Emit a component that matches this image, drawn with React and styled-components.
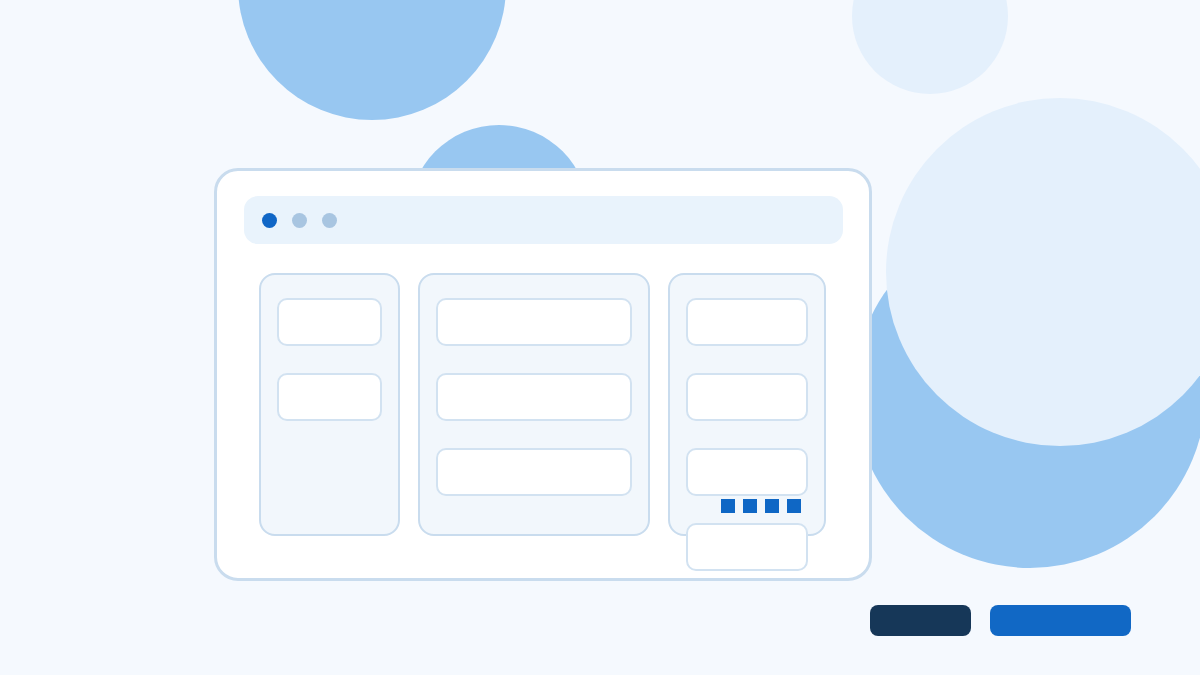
import React from 'react';
import styled, { createGlobalStyle } from 'styled-components';

const GlobalStyle = createGlobalStyle`
  html, body {
    margin: 0;
    padding: 0;
    background: #f5f9fe;
    font-family: "Liberation Sans", Arial, sans-serif;
  }
  * { box-sizing: border-box; }
`;

const Page = styled.div`
  position: relative;
  width: 1200px;
  height: 675px;
  overflow: hidden;
  background: #f5f9fe;
  display: flex;
  flex-direction: column;
  padding: 168px 69px 0 214px;
`;

// decorative background bubbles
const Bubble = styled.div`
  position: absolute;
  border-radius: 50%;
  left: ${p => p.$x - p.$r}px;
  top: ${p => p.$y - p.$r}px;
  width: ${p => p.$r * 2}px;
  height: ${p => p.$r * 2}px;
  background: ${p => (p.$light ? '#e4f0fc' : '#98c7f1')};
`;

const Window = styled.div`
  position: relative;
  z-index: 1;
  width: 658px;
  height: 413px;
  background: #ffffff;
  border: 3px solid #c9dcee;
  border-radius: 24px;
  padding: 25px 26px 0 27px;
  display: flex;
  flex-direction: column;
`;

const TitleBar = styled.div`
  height: 48px;
  border-radius: 14px;
  background: #e9f3fc;
  display: flex;
  align-items: center;
  gap: 15px;
  padding-left: 18px;
`;

const Dot = styled.span`
  width: 15px;
  height: 15px;
  border-radius: 50%;
  background: ${p => (p.$active ? '#1066c6' : '#a8c5e1')};
`;

const Board = styled.div`
  display: flex;
  gap: 18px;
  margin-top: 29px;
  padding-left: 15px;
`;

const Column = styled.div`
  position: relative;
  width: ${p => p.$w}px;
  height: 263px;
  border: 2px solid #c9dcee;
  border-radius: 16px;
  background: #f2f7fc;
  padding: 23px 16px 0;
  display: flex;
  flex-direction: column;
  gap: 27px;
`;

const Card = styled.div`
  flex: none;
  height: 48px;
  background: #ffffff;
  border: 2px solid #d2e2f1;
  border-radius: 10px;
`;

const Handle = styled.div`
  position: absolute;
  right: 23px;
  top: 224px;
  display: flex;
  gap: 8px;
`;

const Square = styled.span`
  width: 14px;
  height: 14px;
  background: #0f67c5;
`;

const Footer = styled.div`
  position: relative;
  z-index: 1;
  display: flex;
  justify-content: flex-end;
  gap: 19px;
  margin-top: 24px;
`;

const Button = styled.div`
  width: ${p => p.$w}px;
  height: 31px;
  border-radius: 8px;
  background: ${p => (p.$dark ? '#163758' : '#1168c5')};
`;

const columns = [
  { w: 141, cards: 2 },
  { w: 232, cards: 3 },
  { w: 158, cards: 4, handle: true },
];

export default function App() {
  return (
    <>
      <GlobalStyle />
      <Page>
        <Bubble $x={372} $y={-14} $r={134} />
        <Bubble $x={499} $y={215} $r={90} />
        <Bubble $x={930} $y={16} $r={78} $light />
        <Bubble $x={1030} $y={392} $r={176} />
        <Bubble $x={1060} $y={272} $r={174} $light />

        <Window>
          <TitleBar>
            <Dot $active />
            <Dot />
            <Dot />
          </TitleBar>
          <Board>
            {columns.map((col, i) => (
              <Column key={i} $w={col.w}>
                {Array.from({ length: col.cards }).map((_, j) => (
                  <Card key={j} />
                ))}
                {col.handle && (
                  <Handle>
                    <Square />
                    <Square />
                    <Square />
                    <Square />
                  </Handle>
                )}
              </Column>
            ))}
          </Board>
        </Window>

        <Footer>
          <Button $dark $w={101} />
          <Button $w={141} />
        </Footer>
      </Page>
    </>
  );
}
